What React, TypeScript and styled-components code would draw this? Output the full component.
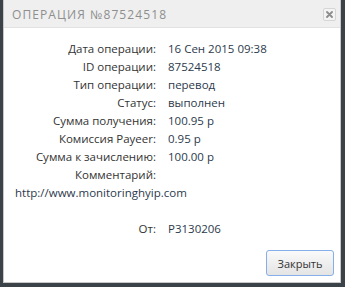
import React from "react";
import styled, { createGlobalStyle } from "styled-components";

const GlobalStyle = createGlobalStyle`
  html, body {
    margin: 0;
    padding: 0;
    background: #3b4248;
    font-family: "Open Sans", "Liberation Sans", sans-serif;
  }
`;

const rows = [
  { label: "Дата операции:", value: "16 Сен 2015 09:38" },
  { label: "ID операции:", value: "87524518" },
  { label: "Тип операции:", value: "перевод" },
  { label: "Статус:", value: "выполнен" },
  { label: "Сумма получения:", value: "100.95 р" },
  { label: "Комиссия Payeer:", value: "0.95 р" },
  { label: "Сумма к зачислению:", value: "100.00 р" },
  { label: "Комментарий:", value: "" },
];

function App() {
  return (
    <>
      <GlobalStyle />
      <Page>
        <Dialog>
          <Header>
            <Title>Операция №87524518</Title>
            <CloseBtn aria-label="close">
              <svg width="7" height="7" viewBox="0 0 7 7">
                <path d="M1 1L6 6M6 1L1 6" stroke="#8c8c8c" strokeWidth="1.8" strokeLinecap="round" />
              </svg>
            </CloseBtn>
          </Header>
          <Body>
            <Grid>
              {rows.map((r) => (
                <React.Fragment key={r.label}>
                  <Label>{r.label}</Label>
                  <Value>{r.value}</Value>
                </React.Fragment>
              ))}
            </Grid>
            <Comment>http://www.monitoringhyip.com</Comment>
            <Grid $top={18}>
              <Label>От:</Label>
              <Value>P3130206</Value>
            </Grid>
          </Body>
          <Footer>
            <Button>Закрыть</Button>
          </Footer>
        </Dialog>
      </Page>
    </>
  );
}

export default App;

const Page = styled.div`
  width: 345px;
  height: 287px;
  padding: 0 4px 4px 3px;
  box-sizing: border-box;
  display: flex;
`;

const Dialog = styled.div`
  flex: 1;
  display: flex;
  flex-direction: column;
  background: #fff;
  border: 1px solid #c8c8c8;
  border-top: none;
`;

const Header = styled.div`
  height: 28px;
  box-sizing: border-box;
  background: #efefef;
  border-bottom: 1px solid #e2e2e2;
  display: flex;
  align-items: center;
  justify-content: space-between;
  padding: 1px 4px 0 8px;
`;

const Title = styled.div`
  text-transform: uppercase;
  font-size: 12px;
  font-weight: 500;
  letter-spacing: 1.1px;
  color: #8e8e8e;
`;

const CloseBtn = styled.div`
  width: 13px;
  height: 13px;
  box-sizing: border-box;
  border: 1px solid #d6d6d6;
  border-radius: 2px;
  background: #f4f4f4;
  display: flex;
  align-items: center;
  justify-content: center;
`;

const Body = styled.div`
  flex: 1;
  padding-top: 12px;
  font-size: 11.5px;
  line-height: 18px;
`;

const Grid = styled.div<{ $top?: number }>`
  display: grid;
  grid-template-columns: 152px 1fr;
  column-gap: 12px;
  margin-top: ${(p) => p.$top || 0}px;
`;

const Label = styled.div`
  text-align: right;
  color: #333;
`;

const Value = styled.div`
  color: #2c3a4c;
`;

const Comment = styled.div`
  padding-left: 11px;
  color: #2c3a4c;
`;

const Footer = styled.div`
  display: flex;
  justify-content: flex-end;
  padding: 0 6px 6px 0;
`;

const Button = styled.button`
  width: 68px;
  height: 26px;
  border: 1px solid #86aee8;
  border-radius: 3px;
  background: linear-gradient(#fafafa, #e4e4e4);
  font-family: "Open Sans", "Liberation Sans", sans-serif;
  font-size: 11px;
  color: #333;
  padding: 0;
`;
